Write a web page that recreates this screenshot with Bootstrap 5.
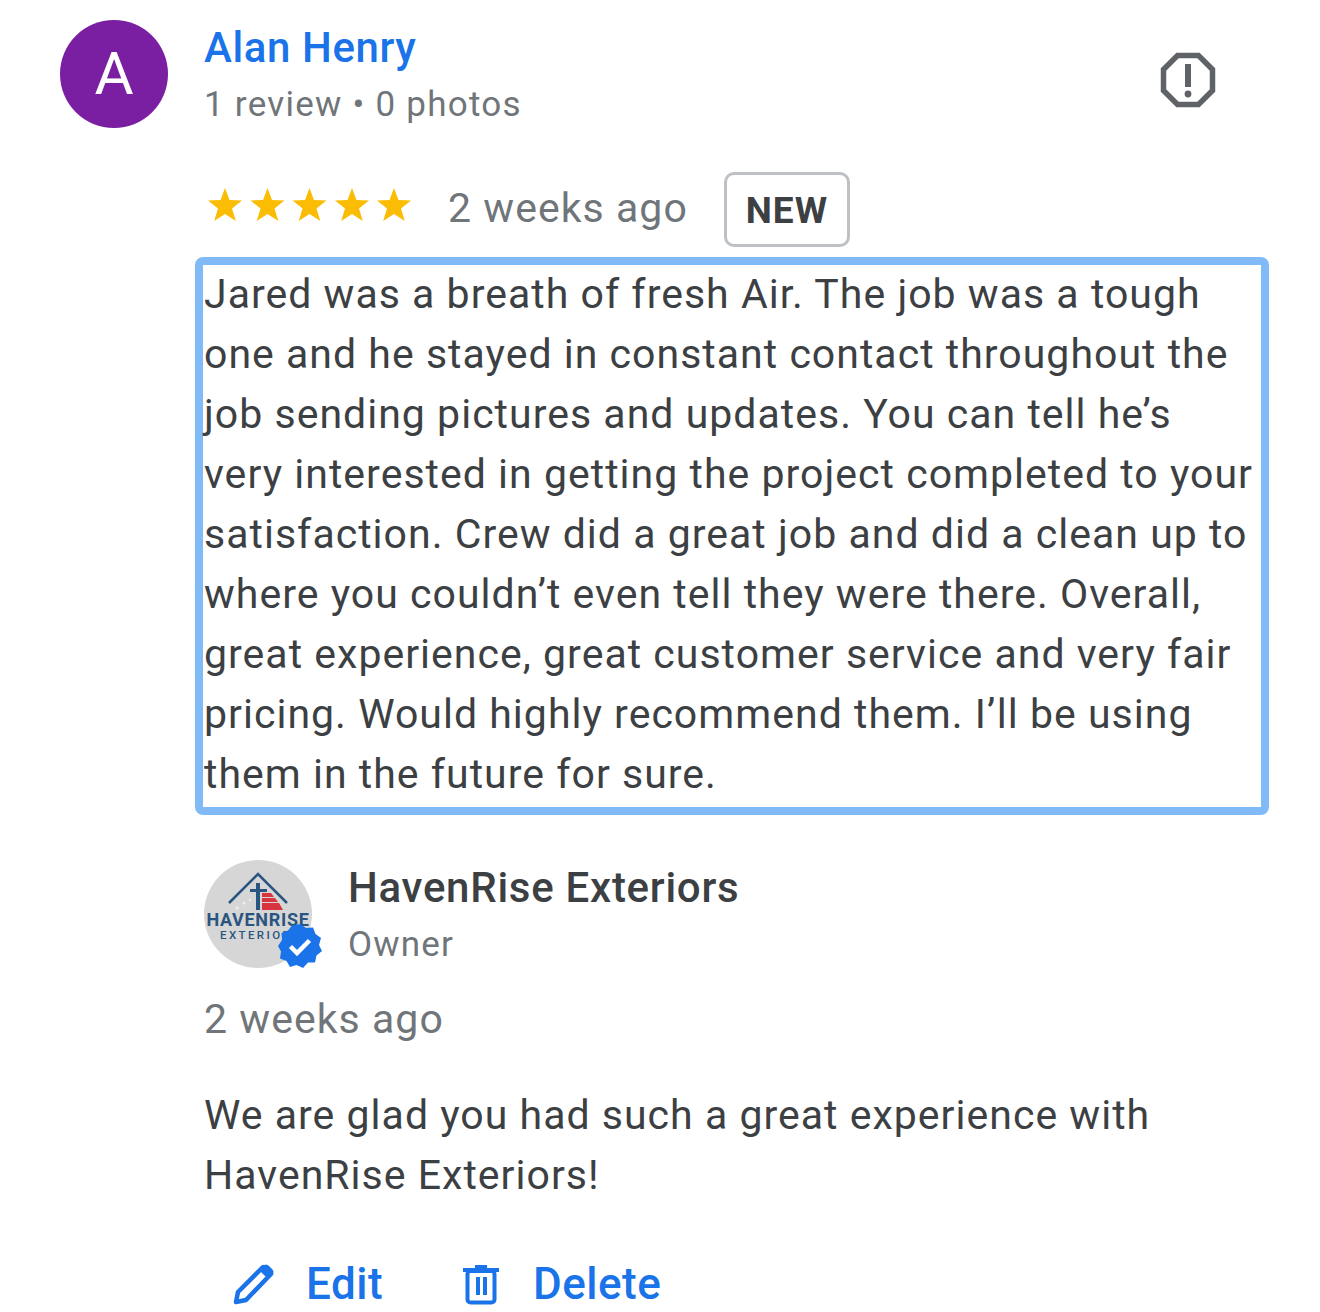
<!DOCTYPE html>
<html lang="en"><head><meta charset="utf-8"><title>Review</title>
<link href="https://cdn.jsdelivr.net/npm/bootstrap@5.3.0/dist/css/bootstrap.min.css" rel="stylesheet">
<style>
html,body{background:#fff;height:1312px;overflow:hidden}
body{font-family:Roboto,"Liberation Sans",sans-serif;color:#3c4043;-webkit-font-smoothing:antialiased}
.rv-wrap{padding:20px 0 0 60px;width:1320px}
.rv-avatar{width:108px;height:108px;background:#7b1fa2;color:#fff;font-size:60px;line-height:1;flex:none}
.rv-main{margin-left:36px;width:1065px}
.rv-name{font-size:42px;line-height:56px;color:#1a73e8;font-weight:500;letter-spacing:.6px}
.rv-meta{font-size:35px;line-height:56px;color:#70757a;letter-spacing:1.25px;padding-top:1px}
.rv-head{height:108px}
.rv-flag{margin-right:53px;margin-top:32px;flex:none}
.rv-rating{margin-top:42px;height:78px}
.rv-stars{width:204px;flex:none;margin:0 0 8px 3px}
.rv-when{font-size:41px;color:#70757a;letter-spacing:1.05px;margin-left:37px}
.rv-new{margin-left:36px;width:126px;height:75px;border:3px solid #bdc1c6;border-radius:10px;font-size:37px;font-weight:700;letter-spacing:1px;padding-top:4px}
.rv-text{font-size:41px;line-height:60px;letter-spacing:1.02px;margin:0}
.rv-box{margin:9px 0 0 -9px;width:1074px;height:558px;border:8px solid #80bbf7;border-radius:8px;padding:0 5px 0 1px}
.rv-box .rv-text{margin-top:-1px}
.rv-owner{margin-top:45px}
.rv-logo{width:108px;height:108px;flex:none;position:relative}
.rv-ownname{font-size:42px;line-height:56px;font-weight:500;letter-spacing:.73px;color:#3c4043}
.rv-ownrole{font-size:35px;line-height:56px;color:#70757a;letter-spacing:1.2px;padding-top:1px}
.rv-ownblock{margin-left:36px}
.rv-check{position:absolute;left:74px;top:64px}
.rv-ago{font-size:41px;line-height:56px;color:#70757a;letter-spacing:1.05px;margin-top:18px}
.rv-reply{margin-top:38px}
.rv-actions{margin-top:55px;margin-left:28px}
.rv-act{font-size:44px;line-height:48px;color:#1a73e8;font-weight:500;letter-spacing:.5px}
.rv-edit{width:230px}
.rv-gap{margin-left:32px}
.rv-gap2{margin-left:33px}
.rv-pen{margin-left:1px;margin-right:-1px}
</style></head><body>
<div class="rv-wrap d-flex">
 <div class="rv-avatar rounded-circle d-flex align-items-center justify-content-center">A</div>
 <div class="rv-main">
  <div class="rv-head d-flex justify-content-between">
   <div>
    <div class="rv-name">Alan Henry</div>
    <div class="rv-meta">1 review • 0 photos</div>
   </div>
   <svg class="rv-flag" width="56" height="56" viewBox="0 0 56 56" aria-hidden="true"><polygon points="17.5,3.5 38.5,3.5 52.5,17.5 52.5,38.5 38.5,52.5 17.5,52.5 3.5,38.5 3.5,17.5" fill="none" stroke="#5f6368" stroke-width="5.5"/><rect x="25" y="12" width="6" height="23" fill="#5f6368"/><circle cx="28" cy="42" r="3.4" fill="#5f6368"/></svg>
  </div>
  <div class="rv-rating d-flex align-items-center">
   <svg class="rv-stars" width="204" height="36" viewBox="0 0 204 36" aria-hidden="true"><g fill="#fbbc04"><polygon id="s" points="18,1 22.5,13 35,13.5 25,21.5 28.8,34 18,27 7.2,34 11,21.5 1,13.5 13.5,13"/><use href="#s" x="42.5"/><use href="#s" x="84.5"/><use href="#s" x="127"/><use href="#s" x="169"/></g></svg>
   <span class="rv-when">2 weeks ago</span>
   <span class="rv-new d-flex align-items-center justify-content-center">NEW</span>
  </div>
  <div class="rv-box"><p class="rv-text">Jared was a breath of fresh Air. The job was a tough one and he stayed in constant contact throughout the job sending pictures and updates. You can tell he’s very interested in getting the project completed to your satisfaction. Crew did a great job and did a clean up to where you couldn’t even tell they were there. Overall, great experience, great customer service and very fair pricing. Would highly recommend them. I’ll be using them in the future for sure.</p></div>
  <div class="rv-owner d-flex">
   <div class="rv-logo">
    <svg width="108" height="108" viewBox="0 0 108 108" aria-hidden="true"><defs><clipPath id="c"><circle cx="54" cy="54" r="54"/></clipPath></defs><circle cx="54" cy="54" r="54" fill="#d6d6d6"/><g clip-path="url(#c)"><path d="M25 43 54 14 83 43" fill="none" stroke="#2a5580" stroke-width="2.5"/><path d="M52 23h4v27h-4zM46 29h17v3H46z" fill="#2a5580"/><path d="M58 33h9l3 4H58zM58 38h13l3 4H58zM58 43h17l4 7H58z" fill="#d8343f"/><g fill="#eee"><circle cx="33" cy="48" r="1.5"/><circle cx="40" cy="43" r="1.5"/><circle cx="46" cy="40" r="1.2"/></g><text x="54" y="66" text-anchor="middle" font-family="Roboto,sans-serif" font-weight="700" font-size="18" letter-spacing=".7" fill="#2a5580">HAVENRISE</text><text x="16" y="79" font-family="Roboto,sans-serif" font-weight="500" font-size="11.5" letter-spacing="2.4" fill="#2a5580">EXTERIORS</text></g></svg>
    <svg class="rv-check" width="44" height="44" viewBox="0 0 44 44" aria-hidden="true"><polygon points="22,0 28,4 35,3.5 37.5,10 43,14 41,21 44,27 38.5,31.5 37,38.5 30,38.5 25,44 18.5,41 12,43 8.5,37 2,34.5 3,27.5 0,22 4,16 3.5,9 10,6.5 14,1.5" fill="#1a73e8"/><path d="M12.5 22.5l6.5 6.5 12.5-12.5" fill="none" stroke="#fff" stroke-width="4.5"/></svg>
   </div>
   <div class="rv-ownblock">
    <div class="rv-ownname">HavenRise Exteriors</div>
    <div class="rv-ownrole">Owner</div>
   </div>
  </div>
  <div class="rv-ago">2 weeks ago</div>
  <p class="rv-text rv-reply">We are glad you had such a great experience with HavenRise Exteriors!</p>
  <div class="rv-actions d-flex align-items-center">
   <div class="rv-edit d-flex align-items-center">
    <svg class="rv-pen" width="42" height="42" viewBox="0 0 42 42" aria-hidden="true"><path d="M30 4l8 7-25 26-10 2 2-10z" fill="none" stroke="#1a73e8" stroke-width="4.5" stroke-linejoin="round"/><path d="M30 3c2-2 4-2 6 0l3 3c2 2 2 4 0 6l-4 4-9-9z" fill="#1a73e8"/></svg>
    <span class="rv-act rv-gap">Edit</span>
   </div>
   <svg width="38" height="42" viewBox="0 0 38 42" aria-hidden="true"><path d="M1 5h36v4H1zM13 2h12v3H13z" fill="#1a73e8"/><rect x="5.5" y="8" width="27" height="31.5" rx="3" fill="none" stroke="#1a73e8" stroke-width="4"/><path d="M14 14h4v18h-4zM21 14h4v18h-4z" fill="#1a73e8"/></svg>
   <span class="rv-act rv-gap2">Delete</span>
  </div>
 </div>
</div>
<script src="https://cdn.jsdelivr.net/npm/bootstrap@5.3.0/dist/js/bootstrap.bundle.min.js"></script>
</body></html>
